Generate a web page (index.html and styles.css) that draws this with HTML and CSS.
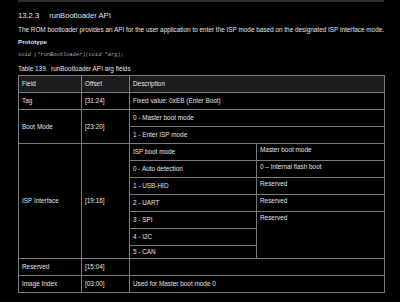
FILE: index.html
```html
<!DOCTYPE html>
<html>
<head>
<meta charset="utf-8">
<link rel="stylesheet" href="styles.css">
</head>
<body>
<div class="page">
  <div class="band"></div>
  <h3 class="heading"><span class="num">13.2.3</span>runBootloader API</h3>
  <p class="para">The ROM bootloader provides an API for the user application to enter the ISP mode based on the designated ISP interface mode.</p>
  <p class="proto">Prototype</p>
  <p class="code">void (*runBootloader)(void *arg);</p>
  <p class="caption">Table 139.&nbsp; runBootloader API arg fields</p>
  <table class="fields">
    <colgroup>
      <col class="c-field">
      <col class="c-offset">
      <col class="c-desc1">
      <col class="c-desc2">
    </colgroup>
    <tr class="head">
      <td>Field</td><td>Offset</td><td colspan="2">Description</td>
    </tr>
    <tr>
      <td>Tag</td><td>[31:24]</td><td colspan="2">Fixed value: 0xEB (Enter Boot)</td>
    </tr>
    <tr>
      <td rowspan="2">Boot Mode</td><td rowspan="2">[23:20]</td><td colspan="2">0 - Master boot mode</td>
    </tr>
    <tr>
      <td colspan="2">1 - Enter ISP mode</td>
    </tr>
    <tr>
      <td rowspan="7">ISP Interface</td><td rowspan="7">[19:16]</td>
      <td class="sub">ISP boot mode</td><td class="top">Master boot mode</td>
    </tr>
    <tr><td class="sub">0 - Auto detection</td><td class="top">0 – Internal flash boot</td></tr>
    <tr><td class="sub">1 - USB-HID</td><td class="top">Reserved</td></tr>
    <tr><td class="sub">2 - UART</td><td class="top">Reserved</td></tr>
    <tr><td class="sub">3 - SPI</td><td class="top" rowspan="3">Reserved</td></tr>
    <tr><td class="sub">4 - I2C</td></tr>
    <tr class="short"><td class="sub">5 - CAN</td></tr>
    <tr>
      <td>Reserved</td><td>[15:04]</td><td colspan="2"></td>
    </tr>
    <tr>
      <td>Image Index</td><td>[03:00]</td><td colspan="2">Used for Master boot mode 0</td>
    </tr>
  </table>
</div>
</body>
</html>
```
FILE: styles.css
```css
html, body {
  margin: 0;
  padding: 0;
  background: #000;
}
body {
  font-family: "Liberation Sans", Arial, sans-serif;
  color: #e2e2e2;
}
.page {
  width: 366px;
  padding-left: 18px;
}
.band {
  height: 2px;
  background: #2e2e2e;
}
.heading {
  margin: 8px 0 0;
  font-size: 7.6px;
  line-height: 12px;
  font-weight: normal;
  color: #e6e6e6;
}
.num {
  margin-right: 10px;
}
.para {
  margin: 3px 0 0;
  font-size: 6.4px;
  line-height: 10px;
  white-space: nowrap;
}
.proto {
  margin: 2px 0 0;
  font-size: 6.2px;
  line-height: 10px;
  font-weight: bold;
}
.code {
  margin: 3px 0 0;
  font-family: "Liberation Mono", "Courier New", monospace;
  font-style: italic;
  font-size: 5.35px;
  line-height: 10px;
  color: #a8a8a8;
}
.caption {
  margin: 4px 0 0;
  font-size: 6.4px;
  line-height: 10px;
}
.fields {
  margin-top: 1px;
  border-collapse: collapse;
  width: 366px;
  table-layout: fixed;
  font-size: 6.4px;
  line-height: 8px;
}
.c-field { width: 63px; }
.c-offset { width: 48px; }
.c-desc1 { width: 127px; }
.c-desc2 { width: 128px; }
.fields td {
  border: 1px solid #7a7a7a;
  height: 17px;
  padding: 0 3px;
  vertical-align: middle;
  box-sizing: border-box;
  white-space: nowrap;
  overflow: hidden;
}
.fields tr.head td {
  background: #1c1c1c;
}
.fields td.top {
  vertical-align: top;
  padding-top: 2px;
}
.fields tr.short td {
  height: 13px;
}
```
